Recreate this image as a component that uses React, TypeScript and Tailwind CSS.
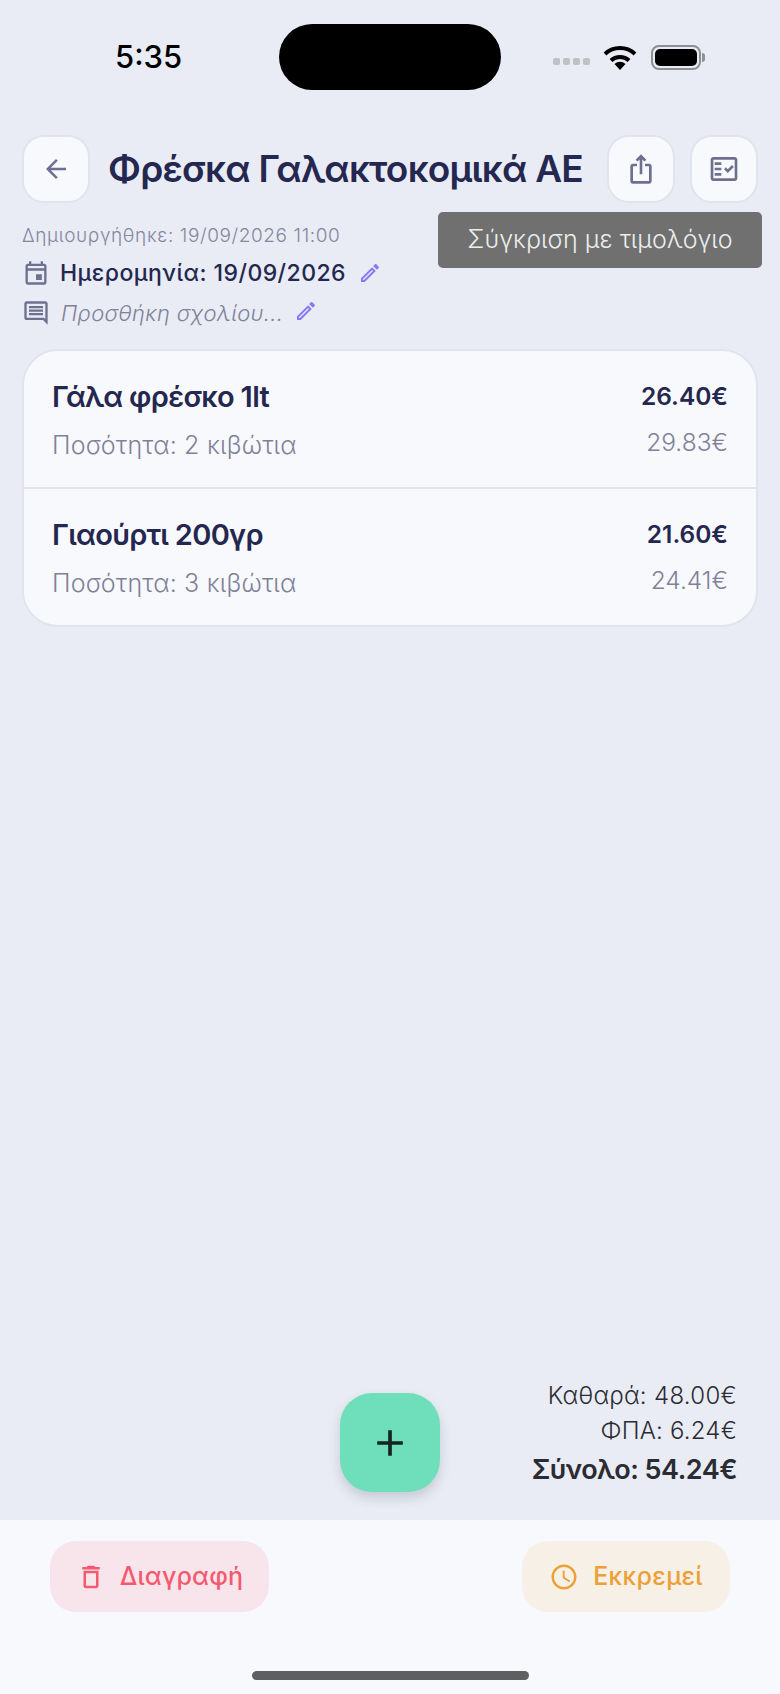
import { MdArrowBack, MdOutlineIosShare, MdOutlineFactCheck, MdOutlineEvent, MdOutlineComment, MdOutlineEdit, MdOutlineDelete, MdAccessTime, MdAdd } from 'react-icons/md';

const items = [
  { name: 'Γάλα φρέσκο 1lt', qty: 'Ποσότητα: 2 κιβώτια', net: '26.40€', gross: '29.83€' },
  { name: 'Γιαούρτι 200γρ', qty: 'Ποσότητα: 3 κιβώτια', net: '21.60€', gross: '24.41€' },
];

const StatusBar = () => (
  <div className="flex h-[90px] shrink-0 items-start pt-6">
    <div className="w-[279px] pl-[115px] pt-[15px] text-[31px] leading-[36px] font-medium text-black font-['Inter',sans-serif]">5:35</div>
    <div className="h-[66px] w-[222px] rounded-[33px] bg-black" />
    <div className="flex items-center pl-[52px] pt-[21px]">
      <div className="mt-[7px] flex gap-[3px]">
        <div className="h-[7px] w-[7px] rounded-[2px] bg-[#c0c1c5]" />
        <div className="h-[7px] w-[7px] rounded-[2px] bg-[#c0c1c5]" />
        <div className="h-[7px] w-[7px] rounded-[2px] bg-[#c0c1c5]" />
        <div className="h-[7px] w-[7px] rounded-[2px] bg-[#c0c1c5]" />
      </div>
      <svg className="ml-[13px]" width="34" height="25" viewBox="0 0 34 25">
        <path d="M17 25 L11.5 19 A8 8 0 0 1 22.5 19 Z" fill="#000" />
        <path d="M8 15.5 A13 13 0 0 1 26 15.5" fill="none" stroke="#000" strokeWidth="4" />
        <path d="M2 9 A22 22 0 0 1 32 9" fill="none" stroke="#000" strokeWidth="4" />
      </svg>
      <div className="ml-[14px] flex items-center">
        <div className="h-[25px] w-[50px] rounded-[8px] border-2 border-[#8e8f92] p-[2px]">
          <div className="h-full w-full rounded-[5px] bg-black" />
        </div>
        <div className="ml-[1px] h-[9px] w-[3px] rounded-r-sm bg-[#8e8f92]" />
      </div>
    </div>
  </div>
);

const IconBox = ({ children }: { children: React.ReactNode }) => (
  <div className="flex h-[68px] w-[68px] shrink-0 items-center justify-center rounded-[22px] border-2 border-[#e1e4ee] bg-[#f8f9fd] text-[#6e7090]">
    {children}
  </div>
);

export default function App() {
  return (
    <div className="relative flex h-[1694px] w-[780px] flex-col overflow-hidden bg-[#e9ecf4] font-['Inter',sans-serif] text-[#24274f]">
      <StatusBar />

      <div className="mt-[45px] flex items-center px-[22px]">
        <IconBox><MdArrowBack size={30} /></IconBox>
        <h1 className="ml-[18px] flex-1 whitespace-nowrap text-[37px] leading-[68px] font-semibold tracking-[-0.75px]">Φρέσκα Γαλακτοκομικά ΑΕ</h1>
        <div className="flex gap-[15px]">
          <IconBox><MdOutlineIosShare size={32} /></IconBox>
          <IconBox><MdOutlineFactCheck size={32} /></IconBox>
        </div>
      </div>

      <div className="absolute left-[438px] top-[212px] flex h-[56px] w-[324px] items-center justify-center rounded-[5px] bg-[#6f706f] text-[25px] font-light text-[#ecedec]">
        Σύγκριση με τιμολόγιο
      </div>

      <div className="mt-[21px] px-[22px]">
        <div className="text-[19px] leading-[24px] font-light tracking-[0.6px] text-[#85879e]">Δημιουργήθηκε: 19/09/2026 11:00</div>
        <div className="mt-[8px] flex h-[34px] items-center">
          <MdOutlineEvent size={28} className="text-[#6e7090]" />
          <span className="ml-[10px] text-[23px] font-medium tracking-[0.45px]">Ημερομηνία: 19/09/2026</span>
          <MdOutlineEdit size={24} className="ml-[12px] text-[#8b78f2]" />
        </div>
        <div className="mt-[6px] flex h-[34px] items-center">
          <MdOutlineComment size={28} className="text-[#6e7090]" />
          <span className="ml-[11px] text-[22px] font-light tracking-[0.3px] text-[#7f8199] italic">Προσθήκη σχολίου...</span>
          <MdOutlineEdit size={24} className="ml-[11px] -mt-[4px] text-[#8b78f2]" />
        </div>
      </div>

      <div className="mx-[22px] mt-[19px] overflow-hidden rounded-[36px] border-2 border-[#e1e4ee] bg-[#f8f9fd]">
        {items.map((item, i) => (
          <div key={item.name} className={`flex justify-between px-[28px] pt-[27px] ${i === 0 ? 'h-[138px] border-b-2 border-[#e1e4ee]' : 'h-[136px]'}`}>
            <div>
              <div className="text-[29px] leading-[38px] font-semibold tracking-[-0.7px]">{item.name}</div>
              <div className="mt-[12px] text-[25px] leading-[34px] font-light tracking-[0.2px] text-[#7f8199]">{item.qty}</div>
            </div>
            <div className="text-right">
              <div className="text-[24.5px] leading-[36px] font-semibold">{item.net}</div>
              <div className="mt-[11px] text-[24.5px] leading-[34px] font-light text-[#7f8199]">{item.gross}</div>
            </div>
          </div>
        ))}
      </div>

      <div className="mt-auto flex items-start pr-[43px] pb-[28px]">
        <div className="ml-[340px] flex h-[99px] w-[100px] items-center justify-center rounded-[32px] bg-[#6fdfbb] text-[#14241f] shadow-[0_6px_12px_rgba(40,50,70,0.18)]">
          <MdAdd size={44} />
        </div>
        <div className="flex-1 -mt-[15px] text-right text-[#2a2b33]">
          <div className="text-[24px] leading-[35px] font-light tracking-[0.3px]">Καθαρά: 48.00€</div>
          <div className="text-[24px] leading-[35px] font-light tracking-[0.2px]">ΦΠΑ: 6.24€</div>
          <div className="mt-[2px] text-[27px] leading-[40px] font-semibold tracking-[-0.5px]">Σύνολο: 54.24€</div>
        </div>
      </div>

      <div className="flex h-[174px] shrink-0 flex-col bg-[#f8f9fd]">
        <div className="mt-[21px] flex justify-between px-[50px]">
          <div className="flex h-[71px] w-[219px] items-center justify-center gap-[14px] rounded-[26px] bg-[#f8e5eb] text-[25px] font-medium tracking-[0.2px] text-[#f4596f]">
            <MdOutlineDelete size={30} />
            <span>Διαγραφή</span>
          </div>
          <div className="flex h-[71px] w-[208px] items-center justify-center gap-[14px] rounded-[26px] bg-[#f7f0e6] text-[25px] font-medium tracking-[0.3px] text-[#eca036]">
            <MdAccessTime size={30} />
            <span>Εκκρεμεί</span>
          </div>
        </div>
        <div className="mx-auto mt-[59px] h-[9px] w-[277px] rounded-full bg-[#5e5f61]" />
      </div>
    </div>
  );
}
